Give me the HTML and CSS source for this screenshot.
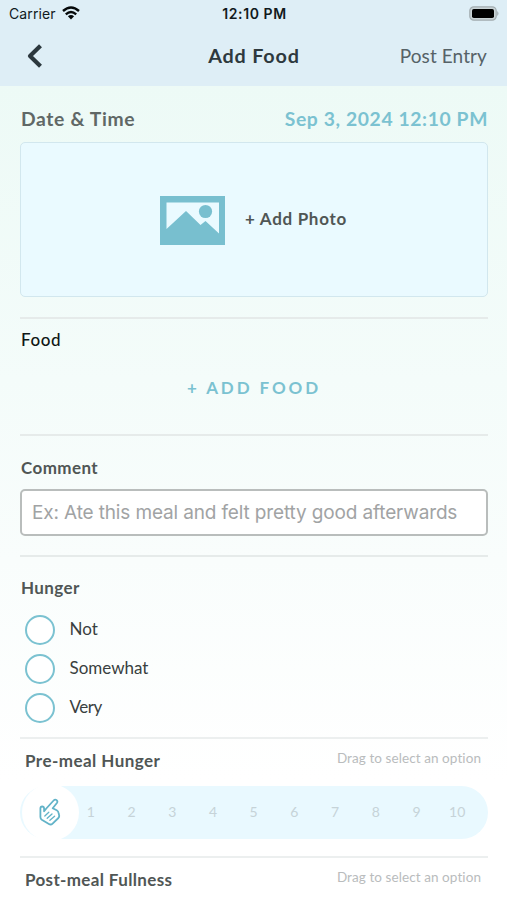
FILE: index.html
```html
<!DOCTYPE html>
<html lang="en">
<head>
<meta charset="utf-8">
<title>Add Food</title>
<link rel="stylesheet" href="styles.css">
</head>
<body>
<header class="top">
  <div class="status">
    <div class="carrier"><span>Carrier</span>
      <svg class="wifi" width="18" height="14" viewBox="0 0 18 14" fill="none" stroke="#050809" stroke-width="2.4"><path d="M1 5Q9-2 17 5M3.8 8.3Q9 3.8 14.2 8.3"/><path d="M5.9 10.3Q9 7.7 12.1 10.3L9 13.6Z" fill="#050809" stroke="none"/></svg>
    </div>
    <span class="clock">12:10 PM</span>
    <svg class="battery" width="31" height="15" viewBox="0 0 31 15"><rect x=".8" y=".8" width="26.4" height="13.4" rx="4" fill="#c9d3d6" stroke="#a3adb1" stroke-width="1.2"/><rect x="3" y="3" width="22" height="9" rx="1.8" fill="#000"/><path d="M28.2 5Q30.8 7.5 28.2 10Z" fill="#a3adb1"/></svg>
  </div>
  <nav class="nav">
    <svg class="back" width="16" height="24" viewBox="0 0 16 24" fill="none" stroke="#2c383e" stroke-width="4.2" stroke-linejoin="round"><path d="M13.5 1.8L3 12L13.5 22.2"/></svg>
    <h1 class="title">Add Food</h1>
    <span class="post">Post Entry</span>
  </nav>
</header>
<main class="content">
  <div class="date-row"><span class="date-label">Date &amp; Time</span><span class="date-value">Sep 3, 2024 12:10 PM</span></div>
  <div class="photo">
    <svg width="65" height="49" viewBox="0 0 65 49"><path fill="#78bfcf" fill-rule="evenodd" d="M0 0H65V49H0ZM6.5 6.5V33L26 15L40.500 29L45.500 25L59 37.500V6.500Z"/><circle cx="45.500" cy="15.500" r="6.600" fill="#78bfcf"/></svg>
    <span class="photo-label">+ Add Photo</span>
  </div>
  <section class="food"><h2 class="label dark">Food</h2><div class="add-food">+ ADD FOOD</div></section>
  <section class="comment"><h2 class="label">Comment</h2><div class="input"><span class="placeholder">Ex: Ate this meal and felt pretty good afterwards</span></div></section>
  <section class="hunger">
    <h2 class="label">Hunger</h2>
    <div class="option"><i class="radio"></i><span>Not</span></div>
    <div class="option"><i class="radio"></i><span class="somewhat">Somewhat</span></div>
    <div class="option"><i class="radio"></i><span class="very">Very</span></div>
  </section>
  <section class="scale">
    <div class="scale-head"><h2 class="label pre">Pre-meal Hunger</h2><span class="hint">Drag to select an option</span></div>
    <div class="track">
      <div class="knob">
        <svg width="22" height="28" viewBox="0 0 22 28" fill="none" stroke="#62b3c8" stroke-width="1.800" stroke-linecap="round" stroke-linejoin="round"><path d="M7.300 10.500L14.600 2.500Q16 .9 17.600 2.100Q19 3.400 17.900 5L13.700 10.200L17.700 12.300Q19.300 13.200 19.600 15L20.200 17.600Q20.300 19 19.400 20L13.600 25.600Q11.900 27.200 9.900 26L2.800 21.800Q1.400 20.800 1.400 19V10.600Q1.400 8.500 3.200 8.500Q4.900 8.500 5.100 10.500V13.300L7.300 10.500"/><path d="M5.800 18L9.800 14.200M8.200 20.300L13 15.900M10.900 22.300L15.600 18.200" stroke-width="1.300"/></svg>
      </div>
      <div class="ticks"><span>1</span><span>2</span><span>3</span><span>4</span><span>5</span><span>6</span><span>7</span><span>8</span><span>9</span><span>10</span></div>
    </div>
  </section>
  <section class="scale last">
    <div class="scale-head"><h2 class="label full">Post-meal Fullness</h2><span class="hint">Drag to select an option</span></div>
  </section>
</main>
</body>
</html>
```
FILE: styles.css
```css
* { box-sizing: border-box; }
body { margin: 0; font-family: Lato, "Liberation Sans", sans-serif; color: #505655; background: linear-gradient(#edfaf6 85px, #f4fcfa 380px, #f9fdfc 560px, #ffffff 780px); white-space: nowrap; font-variant-ligatures: none; }
h1, h2 { margin: 0; }
svg { display: block; flex: none; }
.top { height: 86px; background: #deeef6; }
.status { height: 27px; padding: 0 7px 0 9px; display: grid; grid-template-columns: 1fr auto 1fr; align-items: center; font-family: Inter, sans-serif; color: #111a1d; }
.carrier { display: flex; align-items: center; gap: 6px; font-size: 14px; line-height: 27px; letter-spacing: .1px; }
.wifi { margin-bottom: 2px; }
.battery { margin-bottom: 1px; }
.clock { font-size: 14px; font-weight: 600; letter-spacing: .6px; }
.battery { justify-self: end; }
.nav { height: 59px; padding: 0 20px 0 27px; display: grid; grid-template-columns: 1fr auto 1fr; align-items: center; }
.back { margin-bottom: 2px; }
.title { font-size: 19.8px; font-weight: 700; line-height: 56px; letter-spacing: .8px; color: #2e393e; height: 59px; margin-right: 6px; }
.post { justify-self: end; font-size: 19px; line-height: 57px; height: 59px; letter-spacing: .1px; color: #566267; }
.content { height: 814px; overflow: hidden; padding: 0 19px 0 20px; }
.date-row { display: flex; justify-content: space-between; height: 56px; line-height: 65px; padding: 0 0 0 1px; font-size: 19.300px; font-weight: 700; }
.date-label { letter-spacing: .65px; color: #606866; }
.date-value { letter-spacing: .62px; color: #7bc2d1; }
.photo { height: 155px; border: 1.500px solid #d2e7ee; border-radius: 5px; background: #eafaff; display: flex; align-items: center; padding: 1px 0 0 139px; gap: 20px; }
.photo-label { font-size: 17px; font-weight: 700; letter-spacing: .7px; margin-bottom: 3px; }
.label { font-size: 17px; line-height: 22px; font-weight: 700; letter-spacing: .4px; }
.dark { font-weight: 500; letter-spacing: .6px; color: #101716; }
section { border-top: 2px solid #e6ebea; }
.food { margin-top: 20px; height: 117px; padding: 10px 1px 0; }
.add-food { text-align: center; margin-top: 26px; line-height: 22px; font-size: 17px; font-weight: 700; letter-spacing: 2.900px; color: #7bc2d1; }
.comment { height: 121px; padding-top: 21px; }
.comment .label, .hunger .label { padding-left: 1px; }
.input { height: 47px; margin-top: 10px; border: 2px solid #b9bdbc; border-radius: 5px; background: #fff; padding-left: 10px; font: 19px/43px Inter, sans-serif; letter-spacing: -.14px; color: #a1a3a4; }
.hunger { height: 182px; padding-top: 20px; }
.hunger .label { margin-bottom: 11px; }
.option { height: 39px; padding-left: 5px; display: flex; align-items: center; gap: 14.500px; font-size: 17px; line-height: 20px; color: #393f40; }
.option span { margin-bottom: 2px; }
.very { letter-spacing: -.5px; }
.radio { width: 30px; height: 30px; flex: none; border: 2.500px solid #7bc2d1; border-radius: 50%; background: #fff; }
.scale { height: 119px; border-color: #ecefef; }
.scale-head { height: 47px; padding: 11px 7px 0 5px; display: flex; justify-content: space-between; }
.pre { letter-spacing: .45px; }
.full { letter-spacing: .35px; }
.hint { font-size: 13.500px; line-height: 17px; letter-spacing: .08px; color: #b9bcbd; }
.track { height: 53px; border-radius: 27px; background: #e9f9ff; display: flex; align-items: center; }
.knob { width: 57px; height: 57px; flex: none; margin-left: 1.500px; border-radius: 50%; background: #fff; display: grid; place-items: center; }
.knob svg { margin-bottom: 2px; }
.ticks { width: 407px; display: grid; grid-template-columns: repeat(10, 1fr); margin-left: -8px; text-align: center; font-size: 14px; line-height: 20px; margin-bottom: 2px; color: #c6d3d8; }
```
